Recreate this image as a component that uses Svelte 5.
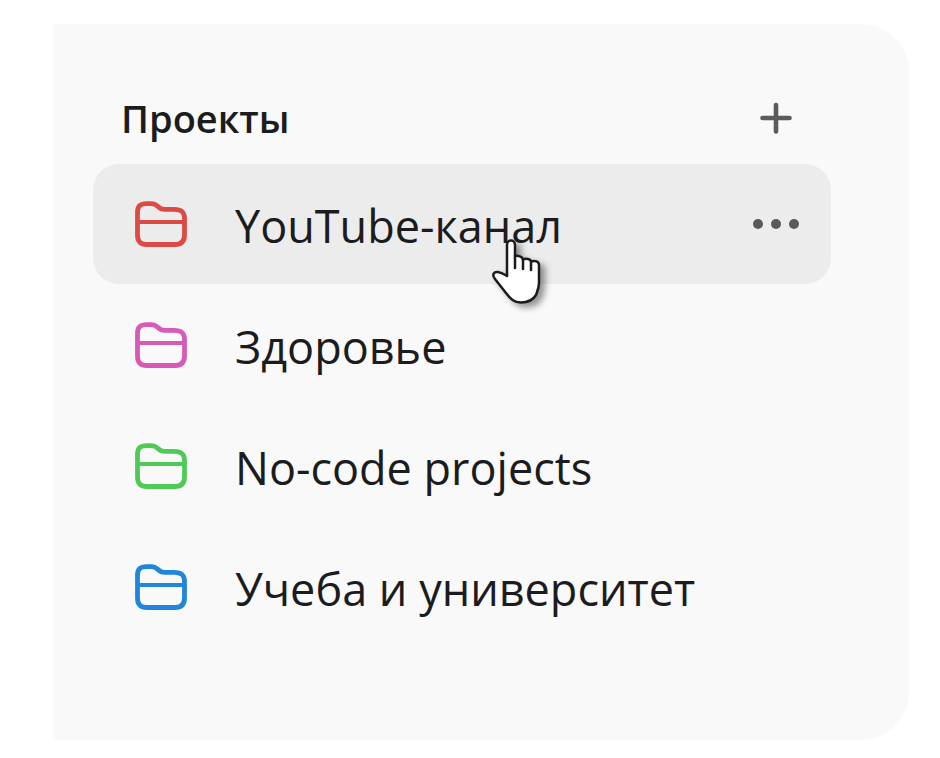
<script>
  const projects = [
    { name: 'YouTube-канал', color: '#dc4a45' },
    { name: 'Здоровье', color: '#d65bb4' },
    { name: 'No-code projects', color: '#4fca57' },
    { name: 'Учеба и университет', color: '#2086dc' },
  ];
  let active = $state(0);
</script>

<aside class="panel">
  <header>
    <h2>Проекты</h2>
    <button class="icon-button" aria-label="Добавить проект">
      <svg width="32" height="32" viewBox="0 0 32 32" aria-hidden="true">
        <path d="M16 3V29.500M2.500 16H29.500" stroke="#5b5b5b" stroke-width="4.600" stroke-linecap="round" />
      </svg>
    </button>
  </header>

  <ul>
    {#each projects as project, i}
      <li class:active={i === active}>
        <a href="#project-{i}" onclick={() => (active = i)}>
          <svg class="folder" width="54" height="48" viewBox="0 0 54 48" style:color={project.color} aria-hidden="true">
            <path
              d="M3.500 12.500C3.500 6 6.500 3.600 12.500 3.600H17C20.500 3.600 22 4.500 24.300 6.800C26.500 9 27.500 9.400 30.500 9.400H40C47.500 9.400 50.500 12 50.500 18.500V35C50.500 41.500 47.500 44.500 41 44.500H13C6.500 44.500 3.500 41.500 3.500 35Z"
              fill="none" stroke="currentColor" stroke-width="4.800" stroke-linejoin="round" />
            <path d="M4 22H50" stroke="currentColor" stroke-width="3.800" />
          </svg>
          <span>{project.name}</span>
        </a>
        {#if i === active}
          <button class="icon-button" aria-label="Действия с проектом">
            <svg width="48" height="12" viewBox="0 0 48 12" fill="#595959" aria-hidden="true">
              <circle cx="6" cy="6" r="5" />
              <circle cx="24" cy="6" r="5" />
              <circle cx="42" cy="6" r="5" />
            </svg>
          </button>
          <svg class="pointer" width="68" height="76" viewBox="0 0 68 76" aria-hidden="true">
            <path
              d="M17 38V7C17 1 25 1 25 7V18C28 17.500 32.500 18.500 33 21.500C36 20 40.500 21 41 23.500C45 22 49 23.500 49 27V45C49 50 47.500 53 46 57C43 62 38 64.500 31 64.500C24 64.500 20.500 61 16 55L5 41C1.500 36.500 4 33.500 8 34C11.500 34.500 14.500 36.500 17 38Z"
              fill="#fff" stroke="#1b1b1f" stroke-width="2.500" stroke-linejoin="round" />
            <path d="M25 18V30M33 21V31M41 23V32" stroke="#1b1b1f" stroke-width="2.500" stroke-linecap="round" />
          </svg>
        {/if}
      </li>
    {/each}
  </ul>
</aside>

<style>
  :global(body) {
    background: #fff;
  }
  .panel {
    box-sizing: border-box;
    margin: 24px 31px 18px 53px;
    padding: 50px 78px 93px 40px;
    border-radius: 0 48px 48px 0;
    background: #f9f9f9;
    color: #1c1c1e;
    font-family: 'Open Sans', 'Noto Sans', sans-serif;
  }
  header {
    display: flex;
    align-items: center;
    justify-content: space-between;
    height: 88px;
    margin-bottom: 2px;
    padding: 0 31px 0 28px;
  }
  h2 {
    margin: 0;
    font-size: 38px;
    line-height: 48px;
    font-weight: 600;
  }
  .icon-button {
    display: flex;
    align-items: center;
    justify-content: center;
    width: 48px;
    height: 48px;
    padding: 0;
    border: 0;
    background: none;
    cursor: pointer;
  }
  ul {
    display: flex;
    flex-direction: column;
    gap: 1px;
    margin: 0;
    padding: 0;
    list-style: none;
  }
  li {
    position: relative;
    display: flex;
    align-items: center;
    height: 120px;
    padding: 0 31px 0 41px;
    border-radius: 26px;
  }
  .active {
    background: #ececec;
  }
  a {
    display: flex;
    flex: 1;
    align-items: center;
    gap: 47px;
    min-width: 0;
    color: inherit;
    font-size: 45px;
    line-height: 64px;
    text-decoration: none;
    white-space: nowrap;
  }
  a span {
    padding-top: 4px;
  }
  .folder {
    flex: none;
  }
  .pointer {
    position: absolute;
    top: 74px;
    left: 397px;
    filter: drop-shadow(5px 4px 3px rgba(0, 0, 0, 0.4));
    pointer-events: none;
  }
</style>
